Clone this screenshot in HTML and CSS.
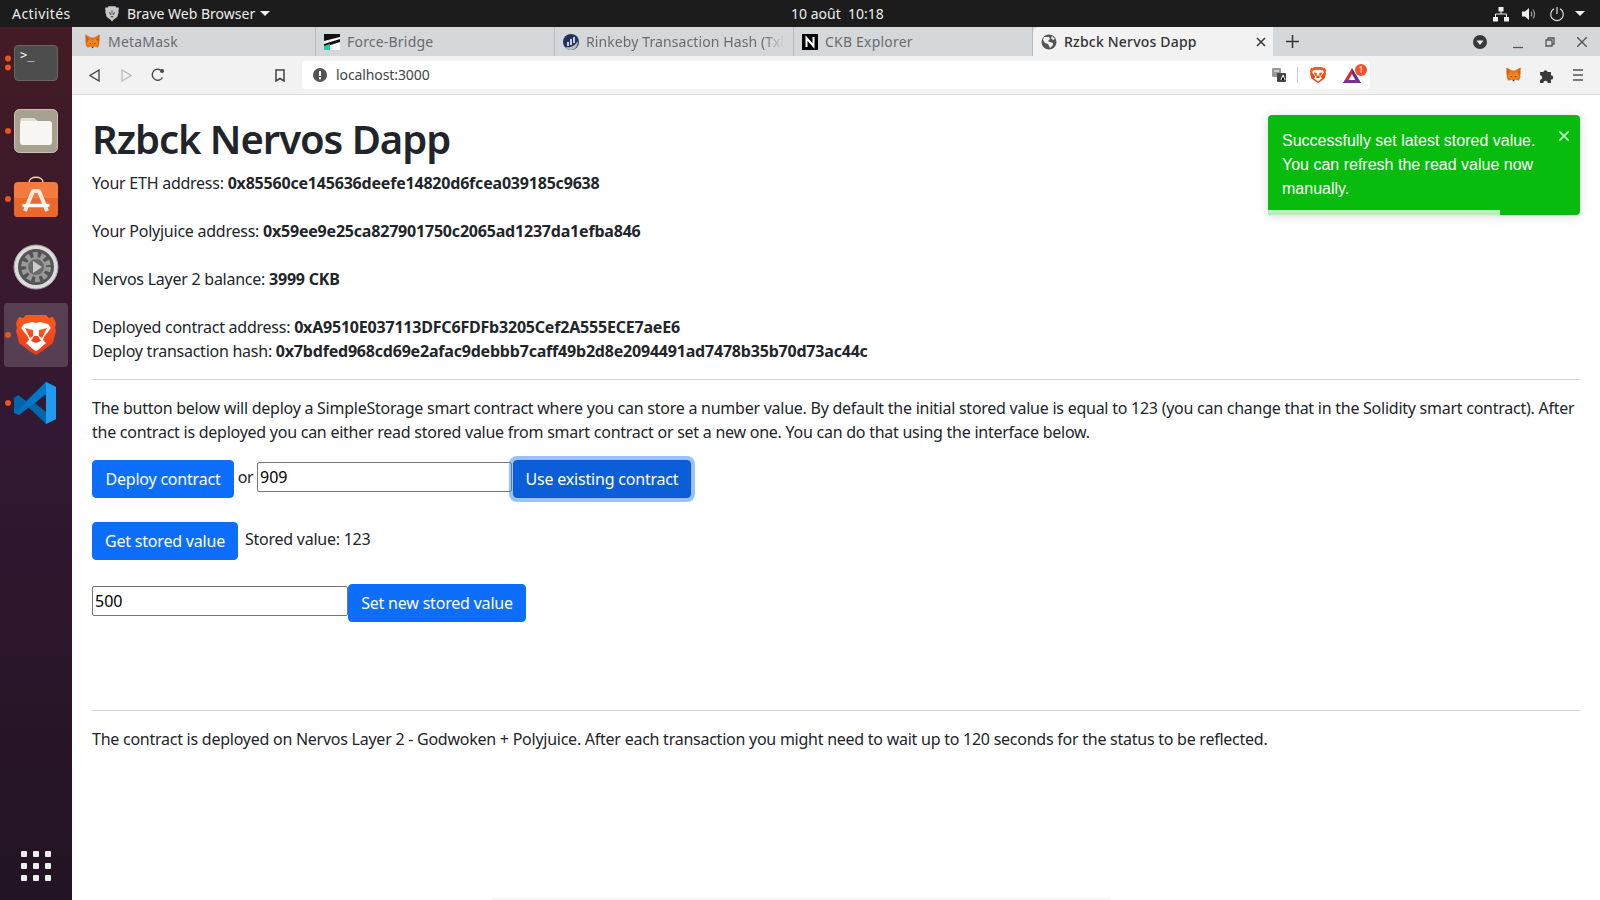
FILE: index.html
```html
<!DOCTYPE html>
<html lang="fr">
<head>
<meta charset="utf-8">
<title>Rzbck Nervos Dapp</title>
<link rel="stylesheet" href="styles.css">
</head>
<body>
<svg class="defs" width="0" height="0">
  <symbol id="fox" viewBox="0 0 32 32">
    <path fill="#e2761b" d="M2 1l11 6h6l11-6-2 13 2 6-3 7-7-1-2 3h-4l-2-3-7 1-3-7 2-6z"/>
    <path fill="#f6851b" d="M9 10l5 2 2 7 2-7 5-2 4 9-5 4h-12l-5-4z"/>
    <path fill="#cd6116" d="M2 1l7 9-6 9-1-5zM30 1l-7 9 6 9 1-5z"/>
    <path fill="#763d16" d="M9 19l4-1 1 3zM23 19l-4-1-1 3z"/>
    <path fill="#e4ebf0" d="M11 25l5 2 5-2-1 4h-8z"/>
    <path fill="#233447" d="M14 26h4l-1 2h-2z"/>
  </symbol>
  <linearGradient id="brave-fill" x1="0" y1="0" x2="0" y2="1">
    <stop offset="0" stop-color="#ff5a1f"/>
    <stop offset="1" stop-color="#e83a1a"/>
  </linearGradient>
  <symbol id="brave" viewBox="0 0 40 40">
    <path fill="url(#brave-fill)" d="M10 0h20l3 3 4-1 3 6-1 5 1 3-3 12-12 9-5 3-5-3-12-9-3-12 1-3-1-5 3-6 4 1z"/>
    <path fill="#fff" d="M8 9l8-2 4 1 4-1 8 2 3 4-7 9-1 3 3 3-8 7-2 1-2-1-8-7 3-3-1-3-7-9z"/>
    <path fill="url(#brave-fill)" d="M9 13l8 2 0 6-3 2zM31 13l-8 2 0 6 3 2zM15 26l3-5h4l3 5-5 2z"/>
    <path fill="#fff" d="M18 29h4l3 1-5 5-5-5z"/>
  </symbol>
  <symbol id="globe" viewBox="0 0 16 16">
    <circle cx="8" cy="8" r="7.500" fill="#555"/>
    <path fill="#f2f2f2" d="M3 3h5l1 2-2 2 2 1 3 1v2l-3 3-2-4-3-1-2-3zM11 2l3 3-2 1-2-2z"/>
  </symbol>
</svg>

<header class="topbar">
  <span class="activities">Activités</span>
  <span class="app-menu">
    <svg class="app-icon" width="14" height="16" viewBox="0 0 44 50"><path fill="#c9c9c9" d="M11 1h22l4 4 5-1 2 5-2 6 1 4-4 15-14 11-3 4-3-4-14-11-4-15 1-4-2-6 2-5 5 1z"/><path fill="#666" d="M12 19l6 1 1 7-3 1zM32 19l-6 1-1 7 3 1zM19 31h6l3 3-6 3-6-3zM20 14h4l-1 14h-2z"/></svg>
    <span>Brave Web Browser</span>
    <i class="caret"></i>
  </span>
  <span class="clock">10 août&nbsp; 10:18</span>
  <span class="tray">
    <svg width="16" height="16" viewBox="0 0 16 16"><path fill="#eee" d="M5.500 1h5v4.500h-5zM0 11h5v4.500H0zM11 11h5v4.500h-5z"/><path fill="none" stroke="#eee" d="M8 5v3M2.500 11V8h11v3"/></svg>
    <svg width="16" height="16" viewBox="0 0 16 16"><path fill="#eee" d="M1 5.500h3L8 2v12L4 10.500H1z"/><path fill="none" stroke="#999" stroke-width="1.200" d="M10 5.500c1 1.500 1 3.500 0 5M12 3.500c2 3 2 6 0 9"/></svg>
    <svg width="16" height="16" viewBox="0 0 16 16"><path fill="none" stroke="#eee" stroke-width="1.100" d="M8 1v7M5 2.800a6.300 6.300 0 1 0 6 0"/></svg>
    <i class="caret tray-caret"></i>
  </span>
</header>

<div class="desktop">
  <nav class="dock">
    <div class="dock-item">
      <span class="dots"><i></i><i></i></span>
      <div class="terminal">&gt;_</div>
    </div>
    <div class="dock-item">
      <span class="dots"><i></i></span>
      <svg width="44" height="44" viewBox="0 0 44 44"><rect x=".5" y=".5" width="43" height="43" rx="5" fill="#a8a18f" stroke="#c8c3b5"/><path fill="#e0ddd4" d="M6 12q0-3 3-3h11l5 4h-19z"/><rect x="6" y="12" width="32" height="24" rx="3" fill="#f8f7f4"/></svg>
    </div>
    <div class="dock-item">
      <span class="dots"><i></i></span>
      <svg class="store-icon" width="44" height="41" viewBox="0 0 44 41"><path fill="none" stroke="#f3d9b8" stroke-width="1.500" d="M15 6.500c0-7 14-7 14 0"/><rect y="6" width="44" height="35" rx="4" fill="#f47b40"/><path fill="#e9682e" d="M0 22h44v15q0 4-4 4H4q-4 0-4-4z"/><path fill="none" stroke="#fbe9de" stroke-width="4" stroke-linejoin="bevel" d="M11 35l8-20h6l8 20"/><path fill="none" stroke="#fff" stroke-width="3.500" stroke-linecap="round" d="M10 29.500h24"/></svg>
    </div>
    <div class="dock-item">
      <svg width="46" height="46" viewBox="0 0 46 46"><circle cx="23" cy="23" r="22" fill="#dcdcdc" stroke="#a5a5a5"/><circle cx="23" cy="23" r="18" fill="#555"/><circle cx="23" cy="23" r="11" fill="none" stroke="#9a9a9a" stroke-width="8" stroke-dasharray="4 3"/><circle cx="23" cy="23" r="9" fill="#6a6a6a" stroke="#999" stroke-width="2"/><path fill="#ccc" d="M20 17l9 6-9 6z"/></svg>
    </div>
    <div class="dock-item dock-active">
      <span class="dots"><i></i></span>
      <svg width="40" height="40"><use href="#brave"/></svg>
    </div>
    <div class="dock-item">
      <span class="dots"><i></i></span>
      <svg width="44" height="42" viewBox="0 0 44 42"><path fill="#0065a9" d="M32 0l10 5v32l-10 5-20-19-8 6-4-3v-10l4-3 8 6zM32 12l-11 9 11 9z"/><path fill="#007acc" d="M0 26l4 3 28-29v12L5 33 0 31z" opacity=".9"/><path fill="#1f9cf0" d="M32 0l10 5v32l-10 5z"/></svg>
    </div>
    <div class="apps-grid">
      <i></i><i></i><i></i><i></i><i></i><i></i><i></i><i></i><i></i>
    </div>
  </nav>

  <div class="browser">
    <div class="tabstrip">
      <div class="tab tab-first"><svg class="fav" width="17" height="16"><use href="#fox"/></svg><span class="tab-title">MetaMask</span></div>
      <div class="tab"><svg class="fav" width="16" height="16" viewBox="0 0 16 16"><rect width="16" height="16" fill="#fff"/><path fill="#111" d="M0 0h16v3L0 7zM16 5v3L0 13v-3z"/><path fill="#1ed1a0" d="M0 12l6-2v6H0z"/></svg><span class="tab-title">Force-Bridge</span></div>
      <div class="tab"><svg class="fav" width="16" height="16" viewBox="0 0 16 16"><circle cx="8" cy="8" r="8" fill="#21325b"/><path fill="#bbb" d="M2 13c4 1 9 0 13-6 0 5-3 9-7 9-3 0-5-1-6-3z"/><path stroke="#fff" stroke-width="1.500" d="M5 12V8M8 11V5M11 9V3"/></svg><span class="tab-title tab-fade">Rinkeby Transaction Hash (Txl</span></div>
      <div class="tab"><svg class="fav" width="16" height="16" viewBox="0 0 16 16"><rect width="16" height="16" fill="#000"/><path fill="none" stroke="#fff" stroke-width="2" d="M4.500 13V4l7 8V3"/></svg><span class="tab-title">CKB Explorer</span></div>
      <div class="tab tab-active"><svg class="fav" width="16" height="16"><use href="#globe"/></svg><span class="tab-title">Rzbck Nervos Dapp</span>
        <svg class="tab-close" width="10" height="10" viewBox="0 0 10 10"><path stroke="#333" stroke-width="1.500" d="M1 1l8 8M9 1l-8 8"/></svg></div>
      <svg class="new-tab" width="13" height="13" viewBox="0 0 13 13"><path stroke="#333" stroke-width="1.500" d="M6.500 0v13M0 6.500h13"/></svg>
      <span class="strip-right">
        <svg class="tabs-menu" width="14" height="14" viewBox="0 0 14 14"><circle cx="7" cy="7" r="7" fill="#3a3a3a"/><path fill="#eee" d="M3.500 5.500h7L7 10z"/></svg>
        <svg width="10" height="14" viewBox="0 0 10 14"><path stroke="#555" stroke-width="1.300" d="M0 12.500h10"/></svg>
        <svg width="10" height="10" viewBox="0 0 10 10"><path fill="none" stroke="#555" stroke-width="1.300" d="M3 3V1h6v6H7M1 3h6v6H1z"/></svg>
        <svg width="10" height="10" viewBox="0 0 10 10"><path stroke="#555" stroke-width="1.400" d="M0 0l10 10M10 0L0 10"/></svg>
      </span>
    </div>
    <div class="toolbar">
      <svg class="tb-back" width="11" height="13" viewBox="0 0 11 13"><path fill="none" stroke="#444" stroke-width="1.300" d="M10 1v11L1 6.500z"/></svg>
      <svg class="tb-fwd" width="11" height="13" viewBox="0 0 11 13"><path fill="none" stroke="#bbb" stroke-width="1.300" d="M1 1v11l9-5.500z"/></svg>
      <svg class="tb-reload" width="14" height="14" viewBox="0 0 14 14"><path fill="none" stroke="#444" stroke-width="1.400" d="M11.500 9.500A5.500 5.500 0 1 1 9.500 2"/><circle cx="11" cy="3" r="2" fill="#444"/></svg>
      <svg class="tb-mark" width="10" height="13" viewBox="0 0 10 13"><path fill="none" stroke="#444" stroke-width="1.500" d="M1 1h8v11L5 9.500 1 12z"/></svg>
      <div class="urlbar">
        <svg width="14" height="14" viewBox="0 0 14 14"><circle cx="7" cy="7" r="7" fill="#555"/><path stroke="#fff" stroke-width="2" d="M7 3v5M7 9.300v2"/></svg>
        <span class="url">localhost:3000</span>
        <span class="url-icons">
          <svg width="14" height="14" viewBox="0 0 14 14"><rect width="9" height="9" rx="1" fill="#999"/><rect x="5" y="5" width="9" height="9" rx="1" fill="#444"/><path stroke="#fff" d="M2 3h5M9 12l2-5 2 5"/></svg>
          <i class="url-sep"></i>
          <svg width="16" height="16"><use href="#brave"/></svg>
          <span class="bat">
            <svg width="18" height="15" viewBox="0 0 18 15"><path fill="#e0272c" d="M9 0L0 15h4L9 6z"/><path fill="#662d91" d="M9 0l9 15h-4L9 6z"/><path fill="#7a2f96" d="M0 15h18l-2-3H2z"/></svg>
            <b class="badge">1</b>
          </span>
        </span>
      </div>
      <svg class="tb-fox" width="17" height="16"><use href="#fox"/></svg>
      <svg class="tb-ext" width="15" height="15" viewBox="0 0 15 15"><path fill="#3a3a3a" d="M1 4h3.300a2.300 2.300 0 0 1 4.400 0H12v3.200a2.200 2.200 0 0 1 0 4.400V15H8.700a2.200 2.200 0 0 0-4.400 0H1v-3.300a2.200 2.200 0 0 0 0-4.400z"/></svg>
      <svg class="tb-menu" width="10" height="12" viewBox="0 0 10 12"><path stroke="#555" stroke-width="1.600" d="M0 1h10M0 6h10M0 11h10"/></svg>
    </div>

    <main class="page">
      <h1>Rzbck Nervos Dapp</h1>
      <p class="info">Your ETH address: <b>0x85560ce145636deefe14820d6fcea039185c9638</b></p>
      <p class="info">Your Polyjuice address: <b>0x59ee9e25ca827901750c2065ad1237da1efba846</b></p>
      <p class="info">Nervos Layer 2 balance: <b>3999 CKB</b></p>
      <p class="info tight">Deployed contract address: <b>0xA9510E037113DFC6FDFb3205Cef2A555ECE7aeE6</b></p>
      <p class="info">Deploy transaction hash: <b>0x7bdfed968cd69e2afac9debbb7caff49b2d8e2094491ad7478b35b70d73ac44c</b></p>
      <hr>
      <p class="info">The button below will deploy a SimpleStorage smart contract where you can store a number value. By default the initial stored value is equal to 123 (you can change that in the Solidity smart contract). After the contract is deployed you can either read stored value from smart contract or set a new one. You can do that using the interface below.</p>
      <div class="row row-first">
        <button class="btn btn-deploy">Deploy contract</button>
        <span class="or">or</span>
        <input class="field field-a" value="909">
        <button class="btn btn-use">Use existing contract</button>
      </div>
      <div class="row">
        <button class="btn btn-get">Get stored value</button>
        <span class="stored">Stored value: 123</span>
      </div>
      <div class="row">
        <input class="field field-b" value="500">
        <button class="btn btn-set">Set new stored value</button>
      </div>
      <hr class="hr-low">
      <p class="info">The contract is deployed on Nervos Layer 2 - Godwoken + Polyjuice. After each transaction you might need to wait up to 120 seconds for the status to be reflected.</p>

      <aside class="toast">
        <span class="toast-text">Successfully set latest stored value. You can refresh the read value now manually.</span>
        <svg class="toast-close" width="10" height="10" viewBox="0 0 10 10"><path stroke="#b9ecc0" stroke-width="1.700" d="M0 0l10 10M10 0L0 10"/></svg>
        <i class="toast-bar"></i>
      </aside>
      <i class="bottom-line"></i>
    </main>
  </div>
</div>
</body>
</html>
```
FILE: styles.css
```css
* { box-sizing: border-box; }
html, body { margin: 0; height: 900px; overflow: hidden; }
body {
  font-family: "Noto Sans", sans-serif;
  font-size: 16px;
  color: #212529;
  background: #fff;
  display: flex;
  flex-direction: column;
}
.defs { position: absolute; }

/* top bar */
.topbar {
  height: 27px;
  flex: none;
  background: #1c1c1c;
  color: #eeeeee;
  font-size: 14px;
  display: flex;
  align-items: center;
  position: relative;
}
.activities { margin-left: 12px; width: 93px; letter-spacing: .45px; }
.app-menu { display: flex; align-items: center; gap: 7px; }
.app-menu .caret { margin-left: -2px; }
.app-icon { margin-right: 1px; }
.caret {
  display: inline-block;
  width: 0; height: 0;
  border: 5px solid transparent;
  border-top: 5px solid #eee;
  border-bottom: 0;
}
.clock {
  position: absolute;
  left: 791px;
  top: 4px;
  line-height: 19px;
  font-size: 14px;
}
.tray {
  margin-left: auto;
  margin-right: 15px;
  display: flex;
  align-items: center;
  gap: 12px;
}
.tray-caret { margin-left: -2px; }

/* layout */
.desktop { flex: 1; display: flex; min-height: 0; }

/* dock */
.dock {
  width: 72px;
  flex: none;
  padding: 4px 4px 19px;
  display: flex;
  flex-direction: column;
  gap: 4px;
  background: linear-gradient(180deg, #431b24 0%, #321832 45%, #221422 100%);
}
.dock-item {
  height: 64px;
  flex: none;
  display: flex;
  align-items: center;
  justify-content: center;
  position: relative;
  border-radius: 4px;
}
.dock-active { background: rgba(255,255,255,.17); }
.store-icon { margin-bottom: 6px; }
.dots {
  position: absolute;
  left: 1px;
  top: 50%;
  transform: translateY(-50%);
  display: flex;
  flex-direction: column;
  gap: 3px;
}
.dots i { width: 6px; height: 6px; border-radius: 50%; background: #e9541f; display: block; }
.terminal {
  width: 44px;
  height: 36px;
  background: #4d4d4d;
  border: 1px solid #666;
  border-radius: 4px;
  color: #f2f2f2;
  font: 12px/14px "DejaVu Sans Mono", monospace;
  padding: 2px 5px;
}
.apps-grid {
  margin: auto auto 0;
  width: 30px;
  display: grid;
  grid-template-columns: repeat(3, 6px);
  gap: 6px;
}
.apps-grid i { height: 6px; border-radius: 1px; background: #eee; display: block; }

/* browser chrome */
.browser { flex: 1; min-width: 0; display: flex; flex-direction: column; }
.tabstrip {
  height: 29px;
  flex: none;
  background: #d5d8db;
  display: flex;
  align-items: center;
  color: #6b6b6b;
  font-size: 14px;
}
.tab {
  width: 239px;
  height: 29px;
  flex: none;
  padding-left: 8px;
  display: flex;
  align-items: center;
  gap: 7px;
  border-right: 1px solid #b9bcbf;
  white-space: nowrap;
}
.tab-first { width: 244px; padding-left: 12px; }
.fav { flex: none; }
.tab-title { letter-spacing: .2px; }
.tab-fade {
  letter-spacing: .1px;
  -webkit-mask-image: linear-gradient(90deg, #000 90%, transparent 100%);
  mask-image: linear-gradient(90deg, #000 90%, transparent 100%);
}
.tab-active {
  width: 240px;
  padding-left: 8px;
  background: #f2f2f2;
  color: #333;
  border: 0;
  border-radius: 6px 0 0 0;
  position: relative;
}
.tab-active .tab-title { font-weight: 500; }
.tab-close { position: absolute; right: 7px; top: 10px; }
.new-tab { margin-left: 13px; }
.strip-right {
  margin-left: auto;
  display: flex;
  align-items: center;
  gap: 22px;
  margin-right: 13px;
}
.tabs-menu { margin-right: 4px; }
.toolbar {
  height: 39px;
  flex: none;
  background: #f2f2f2;
  border-bottom: 1px solid #dcdcdc;
  display: flex;
  align-items: center;
}
.tb-back { margin-left: 17px; }
.tb-fwd { margin-left: 21px; }
.tb-reload { margin-left: 19px; }
.tb-mark { margin-left: 110px; }
.urlbar {
  margin-left: 17px;
  width: 1068px;
  height: 28px;
  background: #fff;
  border-radius: 4px;
  display: flex;
  align-items: center;
  padding-left: 11px;
  font-size: 14px;
  color: #444;
}
.url { margin: 0 0 2px 9px; letter-spacing: -.1px; }
.url-icons { margin-left: auto; display: flex; align-items: center; margin-right: 8px; }
.url-sep { width: 1px; height: 16px; background: #ccc; margin: 0 12px 0 11px; display: block; }
.bat { position: relative; margin-left: 17px; width: 18px; height: 15px; display: block; margin-right: 1px; }
.badge {
  position: absolute;
  left: 12px;
  top: -4px;
  width: 12px;
  height: 12px;
  border-radius: 50%;
  background: #f2532b;
  color: #fff;
  font-size: 8px;
  line-height: 12px;
  text-align: center;
  font-weight: 400;
}
.tb-fox { margin-left: 135px; }
.tb-ext { margin-left: 17px; }
.tb-menu { margin-left: 19px; }

/* page */
.page {
  flex: 1;
  min-height: 0;
  padding: 20px 20px 0;
  position: relative;
  background: #fff;
}
h1 {
  margin: 0 0 8px;
  font-size: 40px;
  line-height: 48px;
  font-weight: 600;
  letter-spacing: -1.05px;
}
.info { margin: 0 0 24px; line-height: 24px; letter-spacing: -.25px; }
.info.tight { margin-bottom: 0; }
.info b { font-weight: 700; letter-spacing: -.2px; }
hr { border: 0; border-top: 1px solid #d3d4d5; margin: -8px 0 16px; height: 1px; }
.row { display: flex; align-items: flex-start; margin-top: 24px; height: 38px; }
.row-first { margin-top: -8px; }
.btn {
  height: 38px;
  padding: 0;
  border: 1px solid #0d6efd;
  border-radius: 4px;
  background: #0d6efd;
  color: #fff;
  font: 16px/24px "Noto Sans", sans-serif;
  letter-spacing: -.2px;
  flex: none;
}
.btn-deploy { width: 142px; }
.or { width: 23px; text-align: center; line-height: 34px; letter-spacing: -.3px; }
.field {
  height: 30px;
  border: 1px solid #767676;
  border-radius: 2px;
  padding: 0 2px;
  margin-top: 2px;
  font: 16px "Noto Sans", sans-serif;
  color: #000;
  background: #fff;
}
.field-a { width: 255px; }
.btn-use {
  width: 178px;
  margin-left: 1px;
  background: #0b5ed7;
  border-color: #0a58ca;
  box-shadow: 0 0 0 4px rgba(49,132,253,.5);
}
.btn-get { width: 146px; }
.stored { margin-left: 7px; line-height: 34px; letter-spacing: -.25px; }
.field-b { width: 256px; }
.btn-set { width: 178px; }
.hr-low { margin-top: 88px; }

/* toast */
.toast {
  position: absolute;
  left: 1196px;
  top: 20px;
  width: 312px;
  height: 100px;
  background: #07bc0c;
  border-radius: 4px;
  box-shadow: 0 1px 10px rgba(0,0,0,.1), 0 2px 15px rgba(0,0,0,.05);
  color: #fff;
  font: 16px/24px "Liberation Sans", Arial, sans-serif;
  padding: 14px 30px 0 14px;
  overflow: hidden;
}
.toast-text { display: block; }
.toast-close { position: absolute; right: 11px; top: 16px; }
.toast-bar {
  position: absolute;
  left: 0;
  bottom: 0;
  width: 232px;
  height: 5px;
  background: #b9ecc0;
}
.bottom-line {
  position: absolute;
  left: 420px;
  bottom: 0;
  width: 618px;
  height: 2px;
  background: #f5f5f5;
}
```
